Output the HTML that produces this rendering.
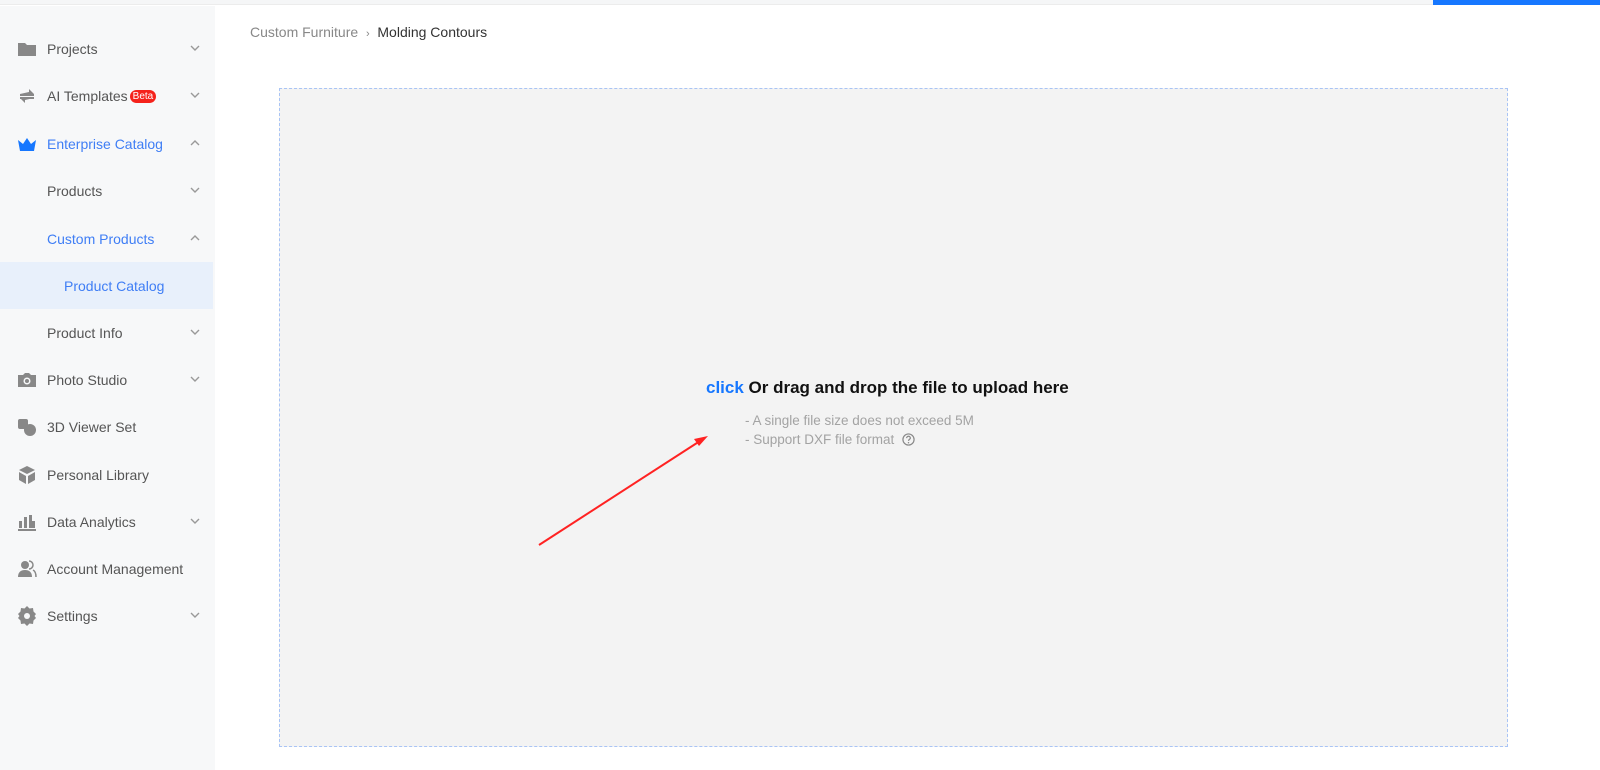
<!DOCTYPE html>
<html><head><meta charset="utf-8"><style>
*{margin:0;padding:0;box-sizing:border-box}
body{width:1600px;height:770px;background:#fff;font-family:"Liberation Sans",sans-serif;position:relative;overflow:hidden}
.top{position:absolute;left:0;top:0;width:1600px;height:5px;background:#f5f6f7;border-bottom:1px solid #ececec}
.bar{position:absolute;left:1433px;top:0;width:167px;height:5px;background:#1677ff}
.side{position:absolute;left:0;top:6px;width:215px;height:764px;background:#f7f8f9}
.item{position:absolute;left:0;width:213px;height:46px;font-size:14px;color:#555;display:flex;align-items:center}
.item .ic{position:absolute;left:17px;top:13px;width:20px;height:20px}
.item .t{position:absolute;left:47px}
.item .ch{position:absolute;left:189px;top:16px;width:12px;height:12px}
.blue{color:#3f7ef5}
.sel{background:#e8f0fb}
.crumb{position:absolute;left:250px;top:24px;font-size:14px;color:#888}
.crumb b{font-weight:normal;color:#333}
.drop{position:absolute;left:279px;top:88px;width:1229px;height:659px;background:#f3f3f3;border:1px dashed #a9c4f5}
.h{position:absolute;left:706px;top:378px;font-size:17px;font-weight:bold;color:#111}
.h span{color:#1677ff}
.s{position:absolute;left:745px;font-size:13.5px;color:#a3a3a3}
</style></head><body>
<div class="top"></div><div class="bar"></div>
<div class="side">
<svg width="0" height="0" style="position:absolute"><defs><symbol id="dn" viewBox="0 0 12 12"><path d="M2 4l4 4 4-4" fill="none" stroke="#999" stroke-width="1.4"/></symbol><symbol id="up" viewBox="0 0 12 12"><path d="M2 8l4-4 4 4" fill="none" stroke="#999" stroke-width="1.4"/></symbol></defs></svg>
<div class="item" style="top:20px"><svg class="ic" viewBox="0 0 20 20"><path d="M1 4h7l2 2h9v11H1z" fill="#888"/></svg><span class="t">Projects</span><svg class="ch"><use href="#dn"/></svg></div>
<div class="item" style="top:67px"><svg class="ic" viewBox="0 0 20 20"><path d="M3 8h14L12 3v3M17 12H3l5 5v-3" fill="#888"/><rect x="3" y="8" width="14" height="2" fill="#888"/><rect x="3" y="11" width="14" height="2" fill="#888"/></svg><span class="t">AI Templates<span style="background:#f5221b;color:#fff;font-size:10px;border-radius:7px;padding:1px 3px;margin-left:2px;vertical-align:2px">Beta</span></span><svg class="ch"><use href="#dn"/></svg></div>
<div class="item blue" style="top:115px"><svg class="ic" viewBox="0 0 20 20"><path d="M1 6l5 4 4-6 4 6 5-4-2 11H3z" fill="#1677ff"/></svg><span class="t">Enterprise Catalog</span><svg class="ch"><use href="#up"/></svg></div>
<div class="item" style="top:162px"><span class="t">Products</span><svg class="ch"><use href="#dn"/></svg></div>
<div class="item blue" style="top:210px"><span class="t">Custom Products</span><svg class="ch"><use href="#up"/></svg></div>
<div class="item blue sel" style="top:256px;height:47px"><span class="t" style="left:64px">Product Catalog</span></div>
<div class="item" style="top:304px"><span class="t">Product Info</span><svg class="ch"><use href="#dn"/></svg></div>
<div class="item" style="top:351px"><svg class="ic" viewBox="0 0 20 20"><path d="M1 5h5l2-2h4l2 2h5v12H1z" fill="#888"/><circle cx="10" cy="11" r="3.5" fill="#f7f8f9"/><circle cx="10" cy="11" r="2" fill="#888"/></svg><span class="t">Photo Studio</span><svg class="ch"><use href="#dn"/></svg></div>
<div class="item" style="top:398px"><svg class="ic" viewBox="0 0 20 20"><rect x="1" y="2" width="10" height="10" rx="2" fill="#888"/><circle cx="13" cy="13" r="6" fill="#888"/></svg><span class="t">3D Viewer Set</span></div>
<div class="item" style="top:446px"><svg class="ic" viewBox="0 0 20 20"><path d="M10 1l8 4-8 4-8-4z" fill="#888"/><path d="M2 7l7 4v8l-7-4zM18 7l-7 4v8l7-4z" fill="#888"/></svg><span class="t">Personal Library</span></div>
<div class="item" style="top:493px"><svg class="ic" viewBox="0 0 20 20"><rect x="2" y="9" width="3" height="7" fill="#888"/><rect x="7" y="5" width="3" height="11" fill="#888"/><rect x="12" y="3" width="3" height="13" fill="#888"/><rect x="15" y="9" width="3" height="7" fill="#888"/><rect x="1" y="17" width="18" height="2" fill="#888"/></svg><span class="t">Data Analytics</span><svg class="ch"><use href="#dn"/></svg></div>
<div class="item" style="top:540px"><svg class="ic" viewBox="0 0 20 20"><circle cx="8" cy="6" r="4" fill="#888"/><path d="M1 18c0-5 3-7 7-7s7 2 7 7z" fill="#888"/><path d="M12 2a4 4 0 010 8M16 11c2 1 3 3 3 7" fill="none" stroke="#888" stroke-width="1.5"/></svg><span class="t">Account Management</span></div>
<div class="item" style="top:587px"><svg class="ic" viewBox="0 0 20 20"><path d="M10 0l2.5 2.5 3.5-.5.5 3.5L19 8l-1.5 2 1.5 2-2.5 2.5-.5 3.5-3.5-.5L10 20l-2.5-2.5-3.5.5-.5-3.5L1 12l1.5-2L1 8l2.5-2.5.5-3.5 3.5.5z" fill="#888"/><circle cx="10" cy="10" r="3" fill="#f7f8f9"/></svg><span class="t">Settings</span><svg class="ch"><use href="#dn"/></svg></div>
</div>
<div class="crumb">Custom Furniture &nbsp;<span style="font-size:11px">›</span>&nbsp; <b>Molding Contours</b></div>
<div class="drop"></div>
<div class="h"><span>click</span> Or drag and drop the file to upload here</div>
<div class="s" style="top:413px">- A single file size does not exceed 5M</div>
<div class="s" style="top:432px">- Support DXF file format &nbsp;<svg width="13" height="13" viewBox="0 0 14 14" style="vertical-align:-2px"><circle cx="7" cy="7" r="6" fill="none" stroke="#888" stroke-width="1.3"/><path d="M5 5.5a2 2 0 114 0c0 1.3-2 1.3-2 3" fill="none" stroke="#888" stroke-width="1.3"/><circle cx="7" cy="10.5" r=".8" fill="#888"/></svg></div>
<svg style="position:absolute;left:0;top:0" width="1600" height="770"><line x1="539" y1="545" x2="700" y2="441" stroke="#f22" stroke-width="2"/><path d="M708 436l-14 3 5 7z" fill="#f22"/></svg>
</body></html>
